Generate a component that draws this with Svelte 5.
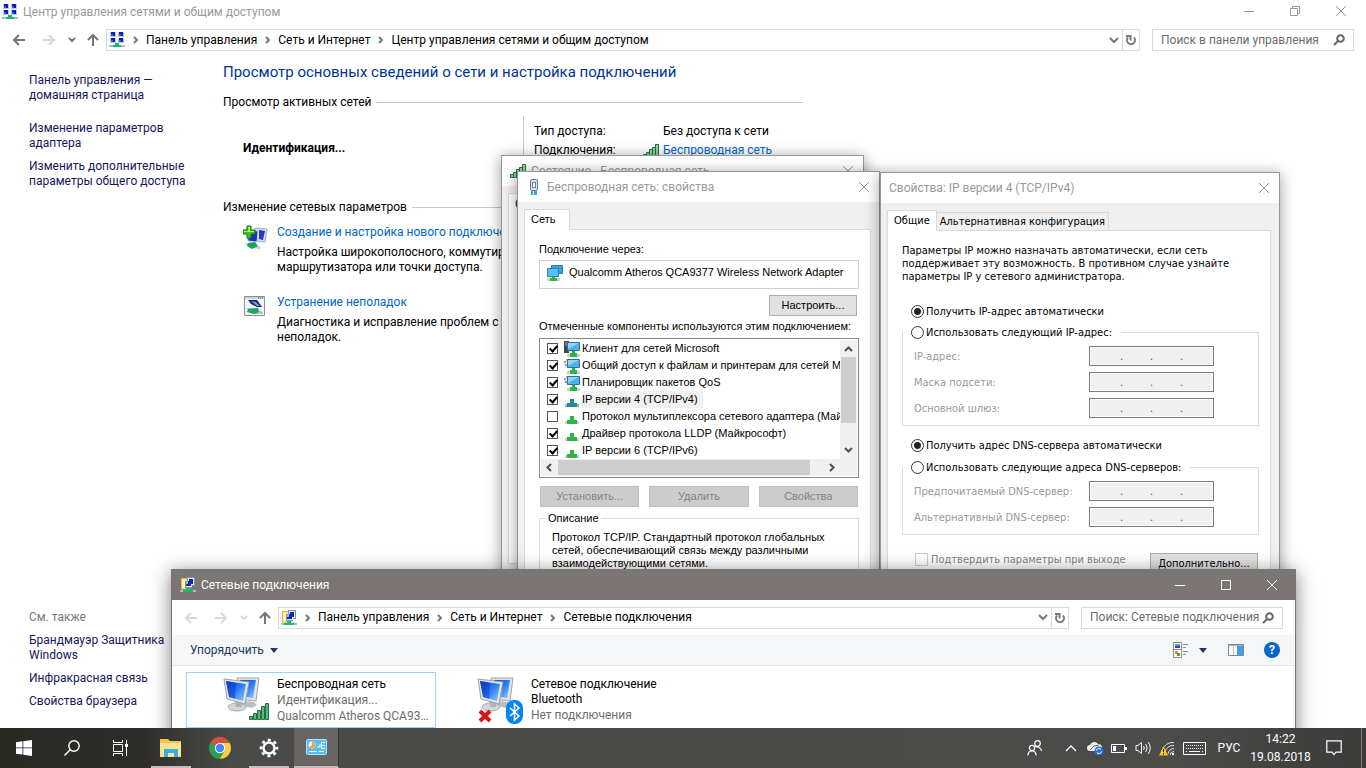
<script lang="ts">
  let searchPanel = $state('');
  let searchConnections = $state('');
  let ipMode = $state('auto');
  let dnsMode = $state('auto');

  let components = $state([
    { name: 'Клиент для сетей Microsoft', icon: 'client', checked: true },
    { name: 'Общий доступ к файлам и принтерам для сетей Microsoft', icon: 'service', checked: true },
    { name: 'Планировщик пакетов QoS', icon: 'service', checked: true },
    { name: 'IP версии 4 (TCP/IPv4)', icon: 'protocol', checked: true, selected: true },
    { name: 'Протокол мультиплексора сетевого адаптера (Майкрософт)', icon: 'protocol', checked: false },
    { name: 'Драйвер протокола LLDP (Майкрософт)', icon: 'protocol', checked: true },
    { name: 'IP версии 6 (TCP/IPv6)', icon: 'protocol', checked: true }
  ]);

  const panelPath = ['Панель управления', 'Сеть и Интернет', 'Центр управления сетями и общим доступом'];
  const connectionsPath = ['Панель управления', 'Сеть и Интернет', 'Сетевые подключения'];
  const ipFields = ['IP-адрес:', 'Маска подсети:', 'Основной шлюз:'];
  const dnsFields = ['Предпочитаемый DNS-сервер:', 'Альтернативный DNS-сервер:'];
</script>

{#snippet closeIcon()}
  <svg width="12" height="12" viewBox="0 0 12 12" fill="none" stroke="currentColor"><path d="M1 1l10 10M11 1L1 11" /></svg>
{/snippet}

{#snippet centerIcon()}
  <svg width="16" height="16" viewBox="0 0 16 16" shape-rendering="crispEdges">
    <path fill="#b9c6e8" d="M1 0h6v5H1zM9 0h6v5H9zM1 6h6v5H1zM9 6h6v5H9z" />
    <path fill="#0b1fae" d="M2 0h4v4H4V2H2zM10 0h4v4h-2V2h-2zM2 6h4v4H4V8H2zM10 6h4v4h-2V8h-2z" />
    <path fill="#3c5ad0" d="M2 2h2v2H2zM10 2h2v2h-2zM2 8h2v2H2zM10 8h2v2h-2z" />
    <path fill="#aebcc0" d="M0 13h16v2H0z" />
    <path fill="#17b978" d="M6 11h4v2h2v2H4v-2h2z" />
  </svg>
{/snippet}

{#snippet folderNetIcon()}
  <svg width="16" height="16" viewBox="0 0 16 16" shape-rendering="crispEdges">
    <path fill="#f7dc6c" stroke="#c9a93d" stroke-width=".6" d="M1 1h5l1 1h3v10H1z" />
    <path fill="#fff2a8" d="M2 3h4v8H2z" />
    <path fill="#8c949c" d="M7 0h8v9h-3v2H5V4h2z" />
    <path fill="#dfe7f5" d="M8 1h6v7H8zM6 4h6v6H6z" />
    <path fill="#1127b5" d="M9 2h4v5H9zM6 4h5v5H6z" />
    <path fill="#8fb0f5" d="M6 4h2v3H6z" />
    <path fill="#aebcc0" d="M0 13h16v2H0z" />
    <path fill="#17b978" d="M6 11h4v2h3v2H3v-2h3z" />
  </svg>
{/snippet}

{#snippet signalIcon()}
  <svg width="16" height="14" viewBox="0 0 16 14" fill="#8fd6a6" stroke="#23703f">
    <path d="M.5 10.500h3v3h-3zM3.500 8.500h3v5h-3zM6.500 5.500h3v8h-3zM9.500 3.500h3v10h-3zM12.500.500h3v13h-3z" />
  </svg>
{/snippet}

{#snippet monitors()}
  <svg width="40" height="40" viewBox="0 0 40 40">
    <defs>
      <linearGradient id="screen" x1="0" y1="0" x2="1" y2="1">
        <stop offset="0" stop-color="#0a3fd0" /><stop offset=".5" stop-color="#2e7bf5" /><stop offset="1" stop-color="#8ed0ff" />
      </linearGradient>
    </defs>
    <path d="M21 24l10 1 3 3-5 3-9-2z" fill="#b9bdc2" />
    <path d="M14 1l22 0-3 23-18-2z" fill="#dfe2e6" stroke="#a3a8ae" />
    <path d="M17 3l16 0-3 18-13-2z" fill="url(#screen)" />
    <ellipse cx="14" cy="30" rx="9" ry="4" fill="#d3d6da" stroke="#a9adb2" />
    <path d="M12 23h8l-1 7h-6z" fill="#b0b4b9" />
    <path d="M1 2l25 3-4 22-18-5z" fill="#e4e6e9" stroke="#9da2a8" />
    <path d="M3 4l20 3-3 17-14-4z" fill="url(#screen)" />
    <path d="M3 4l10 2-1 16-6-2z" fill="#0836b8" opacity=".45" />
  </svg>
{/snippet}

{#snippet componentIcon(kind: string, selected: boolean)}
  {#if kind === 'protocol'}
    <svg width="16" height="16" viewBox="0 0 16 16">
      <path d="M1 12h14v3H1z" fill={selected ? '#8bb9cf' : '#c3d6c4'} />
      <path d="M6 7h4v4h3v4H3v-4h3z" fill={selected ? '#1f8c92' : '#2fb344'} />
    </svg>
  {:else}
    <svg width="16" height="16" viewBox="0 0 16 16">
      {#if kind === 'client'}
        <path d="M0 0h5v12H0z" fill="#3d4850" /><path d="M1 2h3M1 4h3" stroke="#9fb0b8" />
      {:else}
        <circle cx="4" cy="5" r="3" fill="#fff" stroke="#8b949b" stroke-width="2" stroke-dasharray="2 1" />
      {/if}
      <path d="M3.500 1.500h12v8h-12z" fill="#48b1ee" stroke="#3a6f95" />
      <path d="M4 2h11l-11 6z" fill="#8dd3fa" />
      <path d="M3 13h13v3H3z" fill="#c3d6c4" />
      <path d="M8 10h3v2h2v4H6v-4h2z" fill="#2fb344" />
    </svg>
  {/if}
{/snippet}

{#snippet nav(path: string[], folder: boolean)}
  <div class="history">
    <button class="plain" class:faint={folder} aria-label="Назад">
      <svg width="14" height="14" viewBox="0 0 14 14" fill="none" stroke="currentColor" stroke-width="2"><path d="M13 7H2M7 2L2 7l5 5" /></svg>
    </button>
    <button class="plain faint" aria-label="Вперед">
      <svg width="14" height="14" viewBox="0 0 14 14" fill="none" stroke="currentColor" stroke-width="2"><path d="M1 7h11M7 2l5 5-5 5" /></svg>
    </button>
    <button class="plain narrow" class:faint={folder} aria-label="Последние">
      <svg width="8" height="6" viewBox="0 0 8 6" fill="none" stroke="currentColor" stroke-width="2"><path d="M1 1l3 3 3-3" /></svg>
    </button>
    <button class="plain up" aria-label="Вверх">
      <svg width="14" height="14" viewBox="0 0 14 14" fill="none" stroke="currentColor" stroke-width="2"><path d="M7 13V2M2 7l5-5 5 5" /></svg>
    </button>
  </div>
  <div class="address">
    {#if folder}{@render folderNetIcon()}{:else}{@render centerIcon()}{/if}
    {#each path as part}
      <svg class="crumb-sep" width="6" height="8" viewBox="0 0 6 8" fill="none" stroke="#777" stroke-width="2"><path d="M1 1l3 3-3 3" /></svg>
      <a href="#path">{part}</a>
    {/each}
    <button class="plain drop" aria-label="Предыдущие расположения">
      <svg width="10" height="7" viewBox="0 0 10 7" fill="none" stroke="#777" stroke-width="2"><path d="M1 1l4 4 4-4" /></svg>
    </button>
    <button class="plain refresh" aria-label="Обновить">
      <svg width="12" height="12" viewBox="0 0 12 12" fill="none" stroke="#777" stroke-width="2"><path d="M9 3.500A4 4 0 1 1 3 3.500M1 2h4.500v4.500" /></svg>
    </button>
  </div>
{/snippet}

{#snippet magnifier()}
  <svg width="12" height="12" viewBox="0 0 12 12" fill="none" stroke="#666" stroke-width="2"><circle cx="7.500" cy="4.500" r="3.300" /><path d="M5 7L1 11" /></svg>
{/snippet}

{#snippet ipRow(label: string, id: string)}
  <div class="ip-row">
    <label for={id}>{label}</label>
    <div class="ip-box">
      <input {id} disabled /><span>.</span><input disabled aria-label="{label} 2" /><span>.</span><input
        disabled aria-label="{label} 3" /><span>.</span><input disabled aria-label="{label} 4" />
    </div>
  </div>
{/snippet}

<div class="desktop">
  <section class="panel">
    <header class="panel-title">
      {@render centerIcon()}
      <span>Центр управления сетями и общим доступом</span>
      <div class="controls">
        <button class="plain" aria-label="Свернуть"><svg width="12" height="12" viewBox="0 0 12 12" stroke="currentColor"><path d="M1 6.500h10" /></svg></button>
        <button class="plain" aria-label="Восстановить"><svg width="12" height="12" viewBox="0 0 12 12" fill="none" stroke="currentColor"><path d="M1.500 3.500h7v7h-7zM3.500 3V1.500h7v7H9" /></svg></button>
        <button class="plain" aria-label="Закрыть">{@render closeIcon()}</button>
      </div>
    </header>
    <nav class="nav-row">
      {@render nav(panelPath, false)}
      <div class="search">
        <input type="text" placeholder="Поиск в панели управления" aria-label="Поиск в панели управления" bind:value={searchPanel} />
        {@render magnifier()}
      </div>
    </nav>

    <div class="panel-body">
      <aside>
        <a href="#home">Панель управления — домашняя страница</a>
        <a class="spaced" href="#adapter">Изменение параметров адаптера</a>
        <a href="#sharing">Изменить дополнительные параметры общего доступа</a>
        <p class="see-also">См. также</p>
        <a href="#firewall">Брандмауэр Защитника Windows</a>
        <a href="#infrared">Инфракрасная связь</a>
        <a href="#browser">Свойства браузера</a>
      </aside>
      <main>
        <h1>Просмотр основных сведений о сети и настройка подключений</h1>
        <h2>Просмотр активных сетей</h2>
        <div class="network">
          <strong>Идентификация...</strong>
          <dl>
            <dt>Тип доступа:</dt>
            <dd>Без доступа к сети</dd>
            <dt>Подключения:</dt>
            <dd><a href="#wifi">{@render signalIcon()}Беспроводная сеть</a></dd>
          </dl>
        </div>
        <h2>Изменение сетевых параметров</h2>
        <div class="task">
          <svg width="26" height="26" viewBox="0 0 26 26">
            <path d="M12 3l12 1-2 13-9-1z" fill="#d5dcea" stroke="#a2abbd" />
            <path d="M16 5l6 1-2 9-4-1z" fill="#2639c4" />
            <path d="M4 5l11 1-1 11-9-1z" fill="#1830c0" stroke="#ccd3e6" />
            <path d="M1 18l8 1 9 3-1 2-9-1z" fill="#c3cbd0" />
            <path d="M5 18l7-1 3 4-6 3-5-3z" fill="#19a55a" />
            <path d="M4 1h4v4h4v4H8v4H4V9H0V5h4z" fill="#35c21d" stroke="#1d7d12" />
            <path d="M5 2h2v4h4v1H1V6h4z" fill="#a3f07e" />
          </svg>
          <div>
            <a href="#create">Создание и настройка нового подключения или сети</a>
            <p>Настройка широкополосного, коммутируемого или VPN-подключения либо настройка маршрутизатора или точки доступа.</p>
          </div>
        </div>
        <div class="task">
          <svg width="26" height="26" viewBox="0 0 26 26">
            <path d="M1.500 1.500h20v19h-20z" fill="#f4f6f8" stroke="#87909a" />
            <path d="M2 2h19v2H2z" fill="#cbd2db" />
            <path d="M15 3h1M17 3h1M19 3h1" stroke="#3a4466" />
            <path d="M5 5l9 0 5 7-5 0-6-3z" fill="#10247e" />
            <path d="M8 6l5 1 4 4-3 0z" fill="#7897d8" />
            <path d="M3 13l9 0 8 4v2l-10 0z" fill="#b7c3c5" />
            <path d="M5 14l10-1 1 4-5 2-7-2z" fill="#19a55a" />
          </svg>
          <div>
            <a href="#fix">Устранение неполадок</a>
            <p>Диагностика и исправление проблем с сетью или получение сведений об устранении неполадок.</p>
          </div>
        </div>
      </main>
    </div>
  </section>

  <section class="window status">
    <header class="dialog-title">
      {@render signalIcon()}
      <span>Состояние - Беспроводная сеть</span>
      <button class="plain" aria-label="Закрыть">{@render closeIcon()}</button>
    </header>
    <div class="dialog-body">
      <div class="status-page">Общие</div>
    </div>
  </section>

  <section class="window adapter">
    <header class="dialog-title">
      <svg width="16" height="16" viewBox="0 0 16 16">
        <path d="M5 12h6v4H5z" fill="#39a9dc" /><path d="M7.500 12v4" stroke="#fff" />
        <rect x="4.500" y=".5" width="7" height="11" rx="1.500" fill="#d9e1ee" stroke="#6d7b95" />
        <rect x="6.500" y="3.500" width="3" height="5" fill="#fff" stroke="#6d7b95" />
      </svg>
      <span>Беспроводная сеть: свойства</span>
      <button class="plain" aria-label="Закрыть">{@render closeIcon()}</button>
    </header>
    <div class="dialog-body">
      <div class="tabs"><button class="tab active">Сеть</button></div>
      <div class="page">
        <p>Подключение через:</p>
        <div class="device">
          <svg width="17" height="16" viewBox="0 0 17 16">
            <path d="M5.500.500h11v8h-11z" fill="#37a0e4" stroke="#2b7fbd" />
            <path d="M1.500 3.500h11v8h-11z" fill="#5dbdf5" stroke="#2b7fbd" />
            <path d="M1 13h13v3H1z" fill="#c3d6c4" /><path d="M6 12h3v1h2v3H4v-3h2z" fill="#2fb344" />
          </svg>
          Qualcomm Atheros QCA9377 Wireless Network Adapter
        </div>
        <button class="push configure">Настроить...</button>
        <p class="list-label">Отмеченные компоненты используются этим подключением:</p>
        <div class="list">
          <div class="list-main">
            <ul>
              {#each components as item}
                <li>
                  <label>
                    <input type="checkbox" bind:checked={item.checked} />
                    {@render componentIcon(item.icon, !!item.selected)}
                    <span class:selected={item.selected}>{item.name}</span>
                  </label>
                </li>
              {/each}
            </ul>
            <div class="vscroll">
              <svg width="9" height="6" viewBox="0 0 9 6" fill="none" stroke="#505050" stroke-width="2"><path d="M1 5l3.500-3.500L8 5" /></svg>
              <div class="vthumb"></div>
              <svg width="9" height="6" viewBox="0 0 9 6" fill="none" stroke="#505050" stroke-width="2"><path d="M1 1l3.500 3.500L8 1" /></svg>
            </div>
          </div>
          <div class="hscroll">
            <svg width="6" height="9" viewBox="0 0 6 9" fill="none" stroke="#505050" stroke-width="2"><path d="M5 1L1.500 4.500 5 8" /></svg>
            <div class="hthumb"></div>
            <svg width="6" height="9" viewBox="0 0 6 9" fill="none" stroke="#505050" stroke-width="2"><path d="M1 1l3.500 3.500L1 8" /></svg>
          </div>
        </div>
        <div class="button-row">
          <button class="push" disabled>Установить...</button>
          <button class="push" disabled>Удалить</button>
          <button class="push" disabled>Свойства</button>
        </div>
        <fieldset class="description">
          <legend>Описание</legend>
          <p>Протокол TCP/IP. Стандартный протокол глобальных сетей, обеспечивающий связь между различными взаимодействующими сетями.</p>
        </fieldset>
      </div>
    </div>
  </section>

  <section class="window ipv4">
    <header class="dialog-title">
      <span>Свойства: IP версии 4 (TCP/IPv4)</span>
      <button class="plain" aria-label="Закрыть">{@render closeIcon()}</button>
    </header>
    <div class="dialog-body">
      <div class="tabs">
        <button class="tab active">Общие</button>
        <button class="tab">Альтернативная конфигурация</button>
      </div>
      <div class="page">
        <p>Параметры IP можно назначать автоматически, если сеть поддерживает эту возможность. В противном случае узнайте параметры IP у сетевого администратора.</p>
        <label class="radio first"><input type="radio" name="ip" value="auto" bind:group={ipMode} />Получить IP-адрес автоматически</label>
        <fieldset class="ip-group">
          <legend><label class="radio"><input type="radio" name="ip" value="manual" bind:group={ipMode} />Использовать следующий IP-адрес:</label></legend>
          {#each ipFields as field, i}
            {@render ipRow(field, `ip-${i}`)}
          {/each}
        </fieldset>
        <label class="radio dns"><input type="radio" name="dns" value="auto" bind:group={dnsMode} />Получить адрес DNS-сервера автоматически</label>
        <fieldset class="ip-group dns-group">
          <legend><label class="radio"><input type="radio" name="dns" value="manual" bind:group={dnsMode} />Использовать следующие адреса DNS-серверов:</label></legend>
          {#each dnsFields as field, i}
            {@render ipRow(field, `dns-${i}`)}
          {/each}
        </fieldset>
        <div class="confirm">
          <label><input type="checkbox" disabled />Подтвердить параметры при выходе</label>
          <button class="push">Дополнительно...</button>
        </div>
      </div>
    </div>
  </section>

  <section class="window connections">
    <header class="dark-title">
      {@render folderNetIcon()}
      <span>Сетевые подключения</span>
      <div class="controls">
        <button class="plain" aria-label="Свернуть"><svg width="12" height="12" viewBox="0 0 12 12" stroke="currentColor"><path d="M1 6.500h10" /></svg></button>
        <button class="plain" aria-label="Развернуть"><svg width="12" height="12" viewBox="0 0 12 12" fill="none" stroke="currentColor"><path d="M1.500 1.500h9v9h-9z" /></svg></button>
        <button class="plain" aria-label="Закрыть">{@render closeIcon()}</button>
      </div>
    </header>
    <nav class="nav-row">
      {@render nav(connectionsPath, true)}
      <div class="search">
        <input type="text" placeholder="Поиск: Сетевые подключения" aria-label="Поиск: Сетевые подключения" bind:value={searchConnections} />
        {@render magnifier()}
      </div>
    </nav>
    <div class="toolbar">
      <button class="plain organize">Упорядочить <svg width="8" height="5" viewBox="0 0 8 5" fill="#1e3960"><path d="M0 0h8L4 5z" /></svg></button>
      <div class="tools">
        <button class="plain" aria-label="Вид">
          <svg width="16" height="16" viewBox="0 0 16 16" fill="#fff" stroke="#8b8b8b">
            <path d="M.5.500h8v7h-8zM.5 7.500h8v8h-8z" />
            <path stroke="none" fill="#5a9bd6" d="M2 2h5v2H2z" /><path stroke="none" fill="#274f8b" d="M2 4h5v2H2z" />
            <path stroke="none" fill="#e08a3c" d="M2 9h3v3H2z" /><path stroke="none" fill="#4f9d45" d="M4 11h3v3H4z" />
            <path d="M10 2.500h5M10 5.500h3M10 9.500h5M10 12.500h3" />
          </svg>
        </button>
        <button class="plain" aria-label="Другие варианты"><svg width="8" height="5" viewBox="0 0 8 5" fill="#1e3960"><path d="M0 0h8L4 5z" /></svg></button>
        <button class="plain preview" aria-label="Область просмотра">
          <svg width="16" height="12" viewBox="0 0 16 12"><path d="M.5.500h15v11H.5z" fill="#fff" stroke="#7d8790" /><path d="M1 1h14v1H1z" fill="#aab2ba" /><path d="M5.500 2v9" stroke="#b8bec4" /><path d="M9 2h6v9H9z" fill="#41a1e6" /></svg>
        </button>
        <button class="plain help" aria-label="Справка">?</button>
      </div>
    </div>
    <div class="items">
      <a class="item focused" href="#wireless">
        <span class="item-icon">
          {@render monitors()}
          <svg class="overlay bars" width="22" height="19" viewBox="0 0 22 19" fill="#63b57f" stroke="#23703f">
            <path d="M1.500 14.500h3v3h-3zM5.500 11.500h3v6h-3zM9.500 8.500h3v9h-3zM13.500 4.500h3v13h-3zM17.500 1.500h3v16h-3z" />
          </svg>
        </span>
        <span class="item-text"><b>Беспроводная сеть</b><span>Идентификация...</span><span>Qualcomm Atheros QCA9377 Wireless Network Adapter</span></span>
      </a>
      <a class="item" href="#bluetooth">
        <span class="item-icon">
          {@render monitors()}
          <svg class="overlay cross" width="14" height="14" viewBox="0 0 14 14" fill="none" stroke="#d8151b" stroke-width="4"><path d="M2 2l10 10M12 2L2 12" /></svg>
          <svg class="overlay bt" width="17" height="24" viewBox="0 0 17 24" fill="none"><rect width="17" height="24" rx="8" fill="#0a84f5" /><path d="M4 8l9 8-4.500 4V4L13 8l-9 8" stroke="#fff" stroke-width="1.500" /></svg>
        </span>
        <span class="item-text"><b>Сетевое подключение Bluetooth</b><span>Нет подключения</span></span>
      </a>
    </div>
  </section>

  <footer class="taskbar">
    <button class="slot" aria-label="Пуск">
      <svg width="16" height="16" viewBox="0 0 16 16" fill="#fff"><path d="M0 2.200L6.500 1.300v6.200H0zM7.300 1.200L16 0v7.500H7.300zM0 8.300h6.500v6.300L0 13.700zM7.300 8.300H16V16l-8.700-1.200z" /></svg>
    </button>
    <button class="slot" aria-label="Поиск">
      <svg width="16" height="16" viewBox="0 0 16 16" fill="none" stroke="#fff" stroke-width="1.400"><circle cx="10" cy="6" r="5.200" /><path d="M6.200 9.800L.5 15.500" /></svg>
    </button>
    <button class="slot" aria-label="Представление задач">
      <svg width="17" height="16" viewBox="0 0 17 16" fill="none" stroke="#fff"><path d="M1.500 0v2.500h9V0M1.500 16v-2.500h9V16M1.500 4.500h9v7h-9zM14.500 0v16" /><path d="M13 4h3v3h-3z" fill="#fff" stroke="none" /></svg>
    </button>
    <button class="slot app running" aria-label="Проводник">
      <svg width="22" height="18" viewBox="0 0 22 18"><path d="M0 0h8l2 2h11v15H0z" fill="#f6c445" /><path d="M0 4h21v14H0z" fill="#ffe394" /><path d="M4 18v-8h14v8h-4v-4H8v4z" fill="#36aee8" /></svg>
    </button>
    <button class="slot app" aria-label="Chrome">
      <svg width="22" height="22" viewBox="0 0 22 22">
        <circle cx="11" cy="11" r="11" fill="#2aa14f" />
        <path d="M11 11L1.500 5.500A11 11 0 0 1 20.500 5.500L11 6z" fill="#dd4b3e" />
        <path d="M11 6h9.700A11 11 0 0 1 11 22l4.500-8.500z" fill="#ffcd41" />
        <circle cx="11" cy="11" r="5.200" fill="#fff" /><circle cx="11" cy="11" r="4.200" fill="#4385f5" />
      </svg>
    </button>
    <button class="slot app running" aria-label="Параметры">
      <svg width="20" height="20" viewBox="0 0 20 20" fill="none" stroke="#fff"><circle cx="10" cy="10" r="5.500" stroke-width="2.500" /><circle cx="10" cy="10" r="8" stroke-width="2.600" stroke-dasharray="3 3.283" stroke-dashoffset="1.500" /></svg>
    </button>
    <button class="slot current" aria-label="Панель управления">
      <svg width="21" height="16" viewBox="0 0 21 16"><rect x=".5" y=".5" width="20" height="15" rx="1" fill="#55bdf2" stroke="#b4e2fa" /><circle cx="6" cy="6" r="3.500" fill="#fff" /><path d="M6 6V2.500A3.500 3.500 0 1 1 3 8z" fill="#f3a53a" /><path d="M11 8h3V5M15.500 3v7M16 3.500h3M16 6.500h3M16 9.500h3M3 12.500h8M13 12.500h5" stroke="#fff" fill="none" /></svg>
    </button>
    <div class="tray">
      <button class="plain people" aria-label="Люди">
        <svg width="16" height="16" viewBox="0 0 16 16" fill="none" stroke="#fff" stroke-width="1.200"><circle cx="10.500" cy="3.500" r="2.800" /><path d="M8 7c3-1 6 1 6.500 4" /><circle cx="5" cy="8" r="2.600" /><path d="M.8 15.500c.5-6 7.900-6 8.400 0" /></svg>
      </button>
      <button class="plain" aria-label="Скрытые значки"><svg width="12" height="7" viewBox="0 0 12 7" fill="none" stroke="#fff" stroke-width="1.300"><path d="M1 6l5-5 5 5" /></svg></button>
      <button class="plain" aria-label="OneDrive">
        <svg width="17" height="15" viewBox="0 0 17 15"><path d="M3 10a3 3 0 0 1 0-6 4.500 4.500 0 0 1 8-1 4 4 0 0 1 4 4v3z" fill="#eee" /><path d="M3 9l4-4 5-1" stroke="#666" fill="none" /><circle cx="12" cy="10" r="4.500" fill="#2a6fd0" /><path d="M9.500 9.500a2.500 2.500 0 0 1 4.500-1M14.500 10.500a2.500 2.500 0 0 1-4.500 1" stroke="#fff" fill="none" /></svg>
      </button>
      <button class="plain" aria-label="Батарея"><svg width="16" height="9" viewBox="0 0 16 9"><path d="M.5.500h13v8H.5z" fill="none" stroke="#fff" /><path d="M2 2h3v5H2zM14 3h2v3h-2z" fill="#fff" /></svg></button>
      <button class="plain" aria-label="Громкость"><svg width="17" height="14" viewBox="0 0 17 14" fill="none" stroke="#fff"><path d="M1 4.500h2L6.500 1.500v11L3 9.500H1zM8.500 5a3 3 0 0 1 0 4M10.500 3a6 6 0 0 1 0 8M13 1a9 9 0 0 1 0 12" /></svg></button>
      <button class="plain" aria-label="Сеть">
        <svg width="16" height="16" viewBox="0 0 16 16" fill="none"><path d="M3 11A11 11 0 0 1 15 2.500M6 13A8 8 0 0 1 15 5.500M9 14A6 6 0 0 1 15 8.500M11 15A4 4 0 0 1 15 11.500" stroke="#ddd" /><circle cx="14" cy="14" r="1.200" fill="#fff" /><path d="M4.500 6L9 15.500H0z" fill="#fbc118" /><path d="M4.500 9v3M4.500 13v1.500" stroke="#222" /></svg>
      </button>
      <button class="plain keyboard" aria-label="Клавиатура"><svg width="23" height="13" viewBox="0 0 23 13" fill="none" stroke="#fff"><path d="M.5.500h22v12H.5z" /><path d="M3 3.500h17M3 6.500h17" stroke-dasharray="1 1" /><path d="M3 9.500h1M6 9.500h11M19 9.500h1" /></svg></button>
      <button class="plain lang">РУС</button>
      <button class="plain clock"><span>14:22</span><span>19.08.2018</span></button>
      <button class="plain note" aria-label="Уведомления"><svg width="16" height="16" viewBox="0 0 16 16" fill="none" stroke="#fff" stroke-width="1.200"><path d="M.8.800h14.400v11.400H10L8 14.600 6 12.200H.8z" /></svg></button>
      <button class="plain peek" aria-label="Свернуть все окна"></button>
    </div>
  </footer>
</div>

<style>
  :global(body) {
    margin: 0;
    background: #fff;
  }

  .desktop {
    position: relative;
    height: 100vh;
    overflow: hidden;
    display: flex;
    flex-direction: column;
    font-family: Roboto, 'Noto Sans', sans-serif;
    font-size: 12px;
    line-height: 15px;
    color: #000;
  }

  .desktop * {
    box-sizing: border-box;
  }

  p, h1, h2, ul, dl, dd {
    margin: 0;
    padding: 0;
  }

  svg {
    flex: none;
    display: block;
  }

  a {
    color: inherit;
    text-decoration: none;
  }

  button, input {
    font: inherit;
    color: inherit;
  }

  .plain {
    display: flex;
    align-items: center;
    justify-content: center;
    padding: 0;
    border: 0;
    background: none;
  }

  /* Control panel window */
  .panel {
    flex: 1;
    min-height: 0;
    display: flex;
    flex-direction: column;
  }

  .panel-title {
    display: flex;
    align-items: center;
    gap: 5px;
    height: 24px;
    padding: 0 2px;
    color: #999;
  }

  .controls {
    display: flex;
    align-self: stretch;
    margin-left: auto;
  }

  .controls .plain {
    width: 46px;
  }

  .panel-title .controls {
    padding-bottom: 3px;
  }

  .nav-row {
    display: flex;
    align-items: center;
    height: 32px;
    padding: 0 12px 0 4px;
  }

  .history {
    display: flex;
    width: 102px;
    color: #777;
  }

  .history .plain {
    width: 30px;
    height: 22px;
  }

  .history .narrow {
    width: 16px;
  }

  .history .up {
    width: 26px;
  }

  .history .faint {
    color: #d9d9d9;
  }

  .address {
    flex: 1;
    display: flex;
    align-items: center;
    height: 22px;
    padding-left: 2px;
    border: 1px solid #d9d9d9;
  }

  .address a {
    white-space: nowrap;
  }

  .crumb-sep {
    margin: 0 7px 0 8px;
  }

  .drop {
    width: 16px;
    margin-left: auto;
  }

  .refresh {
    width: 17px;
    align-self: stretch;
    border-left: 1px solid #d9d9d9;
  }

  .search {
    display: flex;
    align-items: center;
    width: 202px;
    height: 22px;
    margin-left: 12px;
    padding: 0 8px;
    border: 1px solid #d9d9d9;
  }

  .search input {
    flex: 1;
    min-width: 0;
    padding: 0;
    border: 0;
    outline: 0;
    background: none;
  }

  .search input::placeholder {
    color: #6d6d6d;
    opacity: 1;
  }

  .panel-body {
    flex: 1;
    min-height: 0;
    display: flex;
  }

  aside {
    display: flex;
    flex-direction: column;
    gap: 8px;
    width: 194px;
    padding: 17px 0 19px 29px;
    color: #16165c;
  }

  aside .spaced {
    margin-top: 10px;
  }

  .see-also {
    margin-top: auto;
    color: #777;
  }

  main {
    width: 580px;
    margin-left: 29px;
    padding-top: 5px;
  }

  h1 {
    font-size: 15px;
    line-height: 22px;
    font-weight: 400;
    color: #003399;
    white-space: nowrap;
  }

  h2 {
    display: flex;
    align-items: center;
    gap: 5px;
    margin-top: 12px;
    font-size: 12px;
    line-height: 15px;
    font-weight: 400;
  }

  h2::after {
    content: '';
    flex: 1;
    height: 1px;
    background: #c8c8c8;
  }

  .network {
    display: flex;
    height: 72px;
    margin-top: 6px;
  }

  .network strong {
    width: 300px;
    padding: 25px 0 0 20px;
  }

  dl {
    flex: 1;
    display: grid;
    grid-template-columns: 129px 1fr;
    align-content: start;
    row-gap: 4px;
    padding: 8px 0 0 10px;
    border-left: 1px solid #c8c8c8;
  }

  dd a {
    display: flex;
    align-items: center;
    gap: 4px;
    margin-left: -20px;
    color: #0066cc;
  }

  .task {
    display: flex;
    gap: 8px;
    padding-left: 20px;
    margin-top: 10px;
  }

  .task + .task {
    margin-top: 20px;
  }

  .task a {
    color: #0066cc;
  }

  .task p {
    margin-top: 5px;
  }

  /* Dialogs */
  .window {
    position: absolute;
    display: flex;
    flex-direction: column;
    border: 1px solid #969696;
    background: #f0f0f0;
    box-shadow: 0 2px 14px rgba(0, 0, 0, 0.4);
  }

  .status {
    left: 501px;
    top: 155px;
    width: 363px;
    height: 430px;
  }

  .adapter {
    left: 517px;
    top: 171px;
    width: 363px;
    height: 460px;
  }

  .ipv4 {
    left: 880px;
    top: 172px;
    width: 400px;
    height: 460px;
  }

  .dialog-title {
    display: flex;
    align-items: center;
    gap: 5px;
    height: 30px;
    padding-left: 8px;
    background: #fff;
    color: #999;
  }

  .dialog-title .plain {
    width: 30px;
    height: 28px;
    margin-left: auto;
  }

  .dialog-body {
    flex: 1;
    min-height: 0;
    display: flex;
    flex-direction: column;
    padding: 7px 8px 20px 6px;
  }

  .adapter .dialog-body {
    font: 11px/13px 'Liberation Sans', sans-serif;
  }

  .ipv4 .dialog-body {
    font: 11px/13px 'DejaVu Sans Condensed', 'DejaVu Sans', sans-serif;
  }

  .status-page {
    flex: 1;
    padding: 3px 6px;
    border: 1px solid #d9d9d9;
    background: #fff;
  }

  .tabs {
    display: flex;
    align-items: flex-end;
    height: 20px;
  }

  .tab {
    height: 18px;
    padding: 0 3px;
    border: 1px solid #d9d9d9;
    border-left: 0;
    border-bottom: 0;
    background: #f0f0f0;
    white-space: nowrap;
  }

  .tab.active {
    position: relative;
    height: 21px;
    padding: 0 6px 2px;
    margin-bottom: -1px;
    border-left: 1px solid #d9d9d9;
    background: #fff;
  }

  .adapter .tab.active {
    padding-right: 14px;
  }

  .page {
    flex: 1;
    display: flex;
    flex-direction: column;
    padding: 13px 11px 0 14px;
    border: 1px solid #d9d9d9;
    background: #fff;
  }

  .push {
    height: 21px;
    padding: 0;
    border: 1px solid #adadad;
    background: #e1e1e1;
  }

  .push:disabled {
    border-color: #bfbfbf;
    background: #ccc;
    color: #838383;
  }

  .device {
    display: flex;
    align-items: center;
    gap: 6px;
    height: 29px;
    margin-top: 4px;
    padding: 0 6px 4px;
    border: 1px solid #d0d0d0;
    white-space: nowrap;
  }

  .configure {
    align-self: flex-end;
    width: 88px;
    margin: 6px 2px 0 0;
  }

  .list-label {
    margin: 4px 0 5px;
    white-space: nowrap;
  }

  .list {
    padding: 1px;
    border: 1px solid #828790;
  }

  .list-main {
    display: flex;
    height: 119px;
  }

  ul {
    flex: 1;
    min-width: 0;
    overflow: hidden;
    list-style: none;
  }

  li label {
    display: flex;
    align-items: center;
    gap: 2px;
    height: 17px;
    padding-left: 6px;
    white-space: nowrap;
  }

  li label span {
    line-height: 17px;
  }

  li .selected {
    padding-right: 5px;
    background: #f0f0f0;
  }

  input[type='checkbox'] {
    appearance: none;
    position: relative;
    flex: none;
    width: 11px;
    height: 11px;
    margin: 0 4px 0 0;
    border: 1px solid #555;
    background: #fff;
  }

  input[type='checkbox']:checked::after {
    content: '';
    position: absolute;
    left: 3px;
    top: 0;
    width: 3px;
    height: 6px;
    border: solid #000;
    border-width: 0 2px 2px 0;
    transform: rotate(42deg);
  }

  .vscroll {
    display: flex;
    flex-direction: column;
    align-items: center;
    width: 17px;
    padding: 6px 0;
    background: #f0f0f0;
  }

  .vthumb {
    width: 15px;
    height: 66px;
    margin: 5px 0 auto;
    background: #cdcdcd;
  }

  .hscroll {
    display: flex;
    align-items: center;
    height: 17px;
    padding: 0 22px 0 5px;
    background: #f0f0f0;
  }

  .hthumb {
    flex: 1;
    height: 15px;
    margin: 0 19px 0 6px;
    background: #cdcdcd;
  }

  .button-row {
    display: flex;
    gap: 10px;
    margin-top: 8px;
    padding: 0 1px;
  }

  .button-row .push {
    flex: 1;
  }

  fieldset {
    min-width: 0;
    margin: 0;
    border: 1px solid #dcdcdc;
  }

  .description {
    margin-top: 5px;
    padding: 6px 20px 30px 12px;
  }

  .description legend {
    margin-left: -5px;
    padding: 0 2px 0 1px;
  }

  .ipv4 .radio {
    display: flex;
    align-items: center;
    gap: 2px;
    height: 14px;
    margin-left: 9px;
  }

  .ipv4 .first {
    margin-top: 21px;
  }

  .ipv4 .dns {
    margin-top: 12px;
  }

  input[type='radio'] {
    appearance: none;
    flex: none;
    width: 13px;
    height: 13px;
    margin: 0;
    border: 1px solid #333;
    border-radius: 50%;
    background: #fff;
  }

  input[type='radio']:checked {
    background: radial-gradient(circle, #222 0 3px, #fff 4px);
  }

  .ip-group {
    display: flex;
    flex-direction: column;
    gap: 6px;
    margin-top: 7px;
    padding: 7px 44px 7px 11px;
  }

  .dns-group {
    margin-top: 8px;
  }

  .ip-group legend {
    margin-left: -11px;
    padding: 0 9px 0 0;
  }

  .ip-group legend .radio {
    margin-left: 8px;
  }

  .ip-row {
    display: flex;
    align-items: center;
    justify-content: space-between;
    color: #999;
  }

  .ip-box {
    display: flex;
    align-items: center;
    width: 125px;
    height: 20px;
    padding: 0 3px;
    border: 1px solid #7a7a7a;
    background: #f0f0f0;
    box-shadow: inset 0 0 0 1px #fff;
    color: #555;
  }

  .ip-box input {
    flex: 1;
    min-width: 0;
    padding: 0;
    border: 0;
    background: none;
  }

  .confirm {
    display: flex;
    justify-content: space-between;
    margin-top: 18px;
    padding-right: 1px;
  }

  .confirm label {
    display: flex;
    align-items: center;
    height: 13px;
    margin-left: 13px;
    color: #838383;
  }

  .confirm input[type='checkbox'] {
    width: 13px;
    height: 13px;
    margin-right: 3px;
    border-color: #ccc;
  }

  .confirm .push {
    width: 108px;
  }

  /* Network connections window */
  .connections {
    left: 171px;
    top: 569px;
    right: 70px;
    height: 220px;
    border-color: #7b7574;
    background: #fff;
    box-shadow: 0 3px 18px rgba(0, 0, 0, 0.5);
  }

  .dark-title {
    display: flex;
    align-items: center;
    gap: 5px;
    height: 30px;
    padding-left: 8px;
    background: #7b7574;
    color: #fff;
  }

  .connections .nav-row {
    height: 35px;
  }

  .toolbar {
    display: flex;
    align-items: center;
    justify-content: space-between;
    height: 31px;
    padding: 0 15px 0 18px;
    border-bottom: 1px solid #e3e6ea;
    background: #f5f6f7;
    color: #1e3960;
  }

  .organize {
    gap: 6px;
  }

  .tools {
    display: flex;
    align-items: center;
    gap: 10px;
  }

  .preview {
    margin: 0 10px 0 11px;
  }

  .help {
    width: 16px;
    height: 16px;
    border-radius: 50%;
    background: #0a66c2;
    color: #fff;
    font-weight: 700;
  }

  .items {
    display: flex;
    gap: 4px;
    padding: 6px 14px;
  }

  .item {
    display: flex;
    gap: 12px;
    width: 250px;
    height: 56px;
    padding: 4px 4px 0 36px;
    border: 1px solid transparent;
  }

  .item.focused {
    border-color: #99d1ff;
  }

  .item-icon {
    position: relative;
    width: 42px;
  }

  .overlay {
    position: absolute;
  }

  .bars {
    right: -5px;
    top: 25px;
  }

  .cross {
    left: 1px;
    top: 32px;
  }

  .bt {
    right: -4px;
    top: 23px;
  }

  .item-text {
    flex: 1;
    min-width: 0;
  }

  .item-text b {
    display: block;
    font-weight: 400;
  }

  .item-text span {
    display: block;
    line-height: 16px;
    color: #6d6d6d;
    white-space: nowrap;
    overflow: hidden;
    text-overflow: ellipsis;
  }

  /* Taskbar */
  .taskbar {
    position: relative;
    display: flex;
    height: 40px;
    background: linear-gradient(90deg, #292a24 0, #2c2d28 140px, #4a4a49 230px, #4b4b4a 1180px, #3c3b3a 1366px);
    color: #fff;
  }

  .slot {
    display: flex;
    align-items: center;
    justify-content: center;
    width: 48px;
    padding: 0;
    border: 0;
    background: none;
  }

  .app {
    width: 49px;
  }

  .slot:nth-child(3) {
    margin-right: 2px;
  }

  .running {
    background: linear-gradient(#c9b9b9, #c9b9b9) center bottom / 40px 2px no-repeat;
  }

  .current {
    width: 45px;
    margin-left: 1px;
    border-right: 1px solid #2e2d2c;
    border-bottom: 2px solid #c9b9b9;
    background: #686563;
  }

  .tray {
    display: flex;
    align-items: stretch;
    margin-left: auto;
  }

  .tray .plain {
    width: 24px;
  }

  .tray .people {
    width: 48px;
  }

  .tray .keyboard {
    width: 30px;
  }

  .tray .lang {
    width: 40px;
  }

  .tray .clock {
    flex-direction: column;
    gap: 3px;
    width: 63px;
  }

  .tray .note {
    width: 44px;
    margin-right: 5px;
  }

  .tray .peek {
    width: 5px;
    border-left: 1px solid #858380;
  }
</style>
